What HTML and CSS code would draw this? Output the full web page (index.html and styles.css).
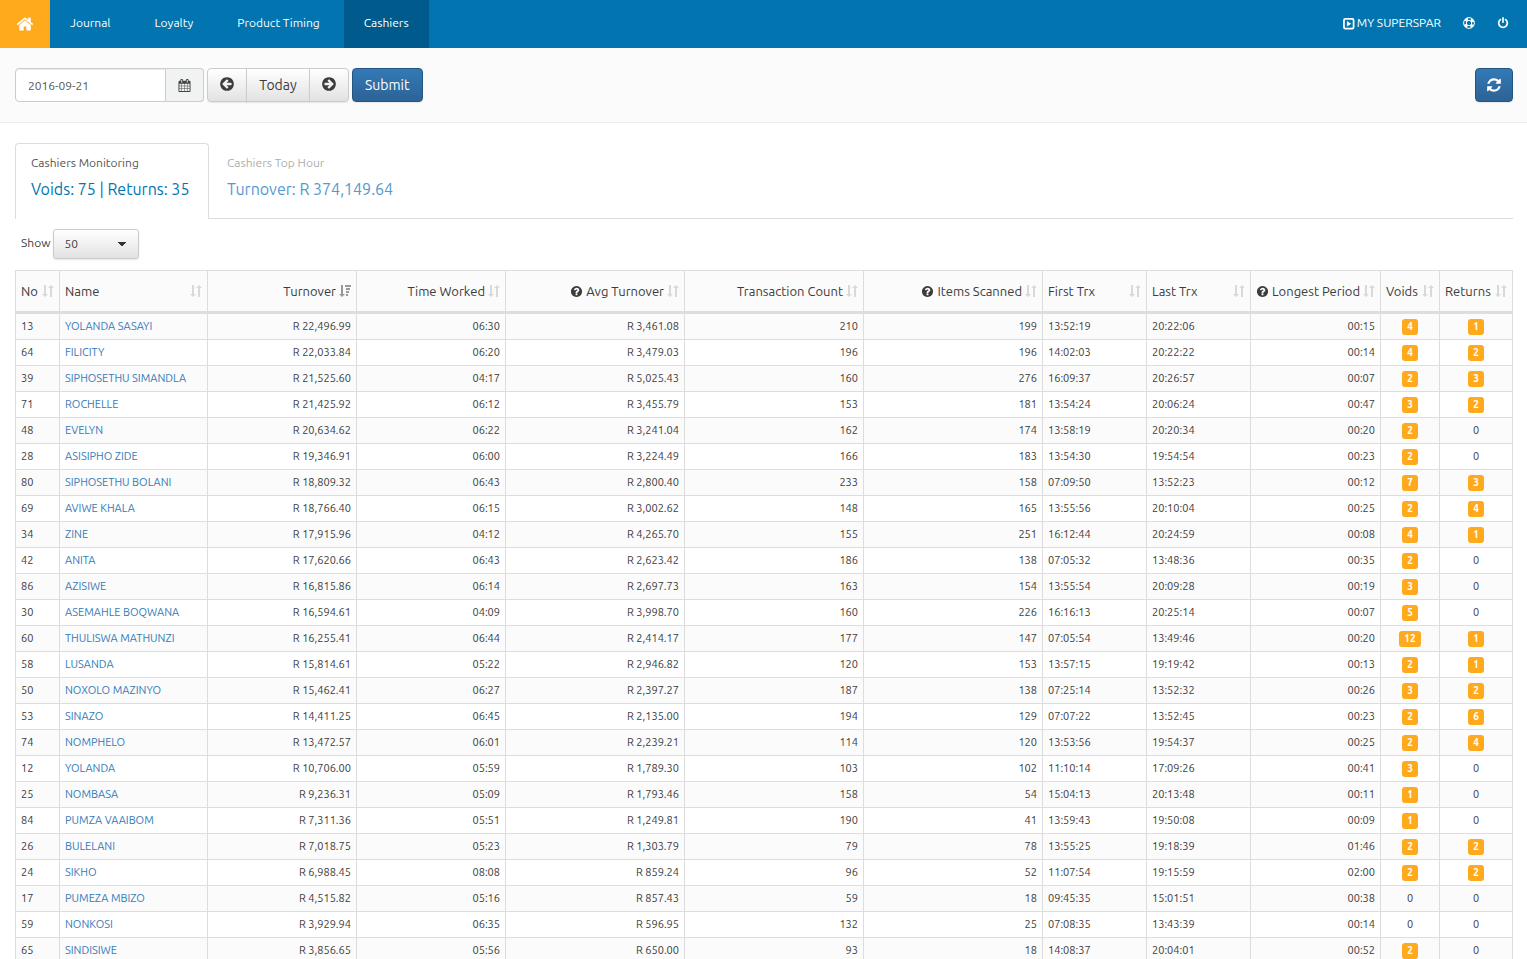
FILE: index.html
```
<!DOCTYPE html>
<html lang="en">
<head>
<meta charset="UTF-8">
<meta name="viewport" content="width=device-width, initial-scale=1.0">
<title>Cashiers</title>
<link rel="stylesheet" href="styles.css">
</head>
<body>
<!-- shared icons -->
<svg class="sprite" aria-hidden="true">
    <symbol id="home" viewBox="0 0 1792 1792"><path d="M1472 992v480q0 26-19 45t-45 19h-384v-384h-256v384h-384q-26 0-45-19t-19-45v-480q0-1 .5-3t.5-3l575-474 575 474q1 2 1 6zm223-69l-62 74q-8 9-21 11h-3q-13 0-21-7l-692-577-692 577q-12 8-24 7-13-2-21-11l-62-74q-8-10-7-23.5t11-21.5l719-599q32-26 76-26t76 26l244 204v-195q0-14 9-23t23-9h192q14 0 23 9t9 23v408l219 182q10 8 11 21.5t-7 23.5z"/></symbol>
    <symbol id="power" viewBox="0 0 1792 1792"><path d="M1664 896q0 156-61 298t-164 245-245 164-298 61-298-61-245-164-164-245-61-298q0-182 80.5-343t226.5-270q43-32 95.5-25t83.5 50q32 42 24.5 94.5t-49.5 84.5q-98 74-151.5 181t-53.5 228q0 104 40.5 198.5t109.5 163.5 163.5 109.5 198.5 40.5 198.5-40.5 163.5-109.5 109.5-163.5 40.5-198.5q0-121-53.5-228t-151.5-181q-42-32-49.5-84.5t24.5-94.5q31-43 84-50t95 25q146 109 226.5 270t80.5 343zm-640-768v640q0 52-38 90t-90 38-90-38-38-90v-640q0-52 38-90t90-38 90 38 38 90z"/></symbol>
    <symbol id="refresh" viewBox="0 0 1792 1792"><path d="M1639 1056q0 5-1 7-64 268-268 434.5t-478 166.5q-146 0-282.5-55t-243.5-157l-129 129q-19 19-45 19t-45-19-19-45v-448q0-26 19-45t45-19h448q26 0 45 19t19 45-19 45l-137 137q71 66 161 102t187 36q134 0 250-65t186-179q11-17 53-117 8-23 30-23h192q13 0 22.5 9.5t9.5 22.5zm25-800v448q0 26-19 45t-45 19h-448q-26 0-45-19t-19-45 19-45l138-138q-148-137-349-137-134 0-250 65t-186 179q-11 17-53 117-8 23-30 23h-199q-13 0-22.5-9.5t-9.5-22.5v-7q65-268 270-434.5t480-166.5q146 0 284 55.5t245 156.5l130-129q19-19 45-19t45 19 19 45z"/></symbol>
    <symbol id="left" viewBox="0 0 1792 1792"><path d="M1408 960v-128q0-26-19-45t-45-19h-502l189-189q19-19 19-45t-19-45l-91-91q-18-18-45-18t-45 18l-362 362-91 91q-18 18-18 45t18 45l91 91 362 362q18 18 45 18t45-18l91-91q18-18 18-45t-18-45l-189-189h502q26 0 45-19t19-45zm256-64q0 209-103 385.5t-279.5 279.5-385.5 103-385.5-103-279.5-279.5-103-385.5 103-385.5 279.5-279.5 385.5-103 385.5 103 279.5 279.5 103 385.5z"/></symbol>
    <symbol id="question" viewBox="0 0 1792 1792"><path d="M1024 1376v-192q0-14-9-23t-23-9h-192q-14 0-23 9t-9 23v192q0 14 9 23t23 9h192q14 0 23-9t9-23zm256-672q0-88-55.5-163t-138.5-116-170-41q-243 0-371 213-15 24 8 42l132 100q7 6 19 6 16 0 25-12 53-68 86-92 34-24 86-24 48 0 85.5 26t37.5 59q0 38-20 61t-68 45q-63 28-115.5 86.5t-52.5 125.5v36q0 14 9 23t23 9h192q14 0 23-9t9-23q0-19 21.5-49.5t54.5-49.5q32-18 49-28.5t46-35 44.5-48 28-60.5 12.5-81zm384 192q0 209-103 385.5t-279.5 279.5-385.5 103-385.5-103-279.5-279.5-103-385.5 103-385.5 279.5-279.5 385.5-103 385.5 103 279.5 279.5 103 385.5z"/></symbol>
    <symbol id="calendar" viewBox="0 0 1792 1792"><path d="M192 1664h288v-288h-288v288zm352 0h320v-288h-320v288zm-352-352h288v-320h-288v320zm352 0h320v-320h-320v320zm-352-384h288v-288h-288v288zm736 736h320v-288h-320v288zm-384-736h320v-288h-320v288zm768 736h288v-288h-288v288zm-384-352h320v-320h-320v320zm-352-864v-288q0-13-9.5-22.5t-22.5-9.5h-64q-13 0-22.5 9.5t-9.5 22.5v288q0 13 9.5 22.5t22.5 9.5h64q13 0 22.5-9.5t9.5-22.5zm736 864h288v-320h-288v320zm-384-384h320v-288h-320v288zm384 0h288v-288h-288v288zm32-480v-288q0-13-9.5-22.5t-22.5-9.5h-64q-13 0-22.5 9.5t-9.5 22.5v288q0 13 9.5 22.5t22.5 9.5h64q13 0 22.5-9.5t9.5-22.5zm384-64v1280q0 52-38 90t-90 38h-1408q-52 0-90-38t-38-90v-1280q0-52 38-90t90-38h128v-96q0-66 47-113t113-47h64q66 0 113 47t47 113v96h384v-96q0-66 47-113t113-47h64q66 0 113 47t47 113v96h128q52 0 90 38t38 90z"/></symbol>
    <symbol id="play" viewBox="0 0 12 12"><rect x="1.8" y="1.8" width="8.9" height="8.9" rx="1.2" fill="none" stroke="currentColor" stroke-width="1.6"/><path d="M4.5 3.6v5.2l4-2.6z"/></symbol>
    <symbol id="ring" viewBox="0 0 12 12"><g fill="none" stroke="currentColor"><circle cx="6" cy="6" r="5.4"/><circle cx="6" cy="6" r="2.7"/><circle cx="6" cy="6" r="4" stroke-width="2.8" stroke-dasharray="3.14 3.14" stroke-dashoffset="-1.57"/></g></symbol>
    <symbol id="sort" viewBox="0 0 12 12"><path d="M2 0h2v9h2l-3 3-3-3h2zM8 12h2V3h2L9 0 6 3h2z"/></symbol>
    <symbol id="desc" viewBox="0 0 12 12"><path d="M2 0h2v9h2l-3 3-3-3h2zM6 0h6v2H6zM7 3h4v2H7zM7 6h3v2H7zM7 9h2v2H7z"/></symbol>
</svg>

<nav class="navbar">
    <a class="home" href="#" aria-label="Home"><svg><use href="#home"/></svg></a>
    <a href="#">Journal</a>
    <a href="#">Loyalty</a>
    <a href="#">Product Timing</a>
    <a class="active" href="#">Cashiers</a>
    <div class="nav-right">
        <a href="#"><svg class="icon"><use href="#play"/></svg> MY SUPERSPAR</a>
        <a href="#" aria-label="Help"><svg class="icon-sm"><use href="#ring"/></svg></a>
        <a href="#" aria-label="Log out"><svg class="icon-sm"><use href="#power"/></svg></a>
    </div>
</nav>

<form class="toolbar" onsubmit="return false">
    <div class="date-group">
        <input type="text" value="2016-09-21" aria-label="Date">
        <button class="addon" type="button" aria-label="Pick a date"><svg class="icon"><use href="#calendar"/></svg></button>
    </div>
    <div class="btn-group">
        <button class="btn btn-icon" type="button" aria-label="Previous day"><svg class="icon-lg"><use href="#left"/></svg></button>
        <button class="btn" type="button">Today</button>
        <button class="btn btn-icon" type="button" aria-label="Next day"><svg class="icon-lg flip"><use href="#left"/></svg></button>
    </div>
    <button class="btn btn-primary" type="submit">Submit</button>
    <button class="btn btn-primary btn-refresh" type="button" aria-label="Refresh"><svg class="icon-lg"><use href="#refresh"/></svg></button>
</form>

<main>
    <div class="tabs">
        <a class="tab active" href="#">
            <span class="tab-title">Cashiers Monitoring</span>
            <span class="tab-value">Voids: 75 | Returns: 35</span>
        </a>
        <a class="tab" href="#">
            <span class="tab-title">Cashiers Top Hour</span>
            <span class="tab-value">Turnover: R 374,149.64</span>
        </a>
    </div>

    <div class="length">
        <label for="length">Show</label>
        <select id="length">
            <option>10</option>
            <option>25</option>
            <option selected>50</option>
            <option>100</option>
        </select>
    </div>

    <table>
        <colgroup>
            <col class="col-no"><col class="col-name"><col class="col-md"><col class="col-md">
            <col class="col-lg"><col class="col-lg"><col class="col-lg">
            <col class="col-trx"><col class="col-trx"><col class="col-period">
            <col class="col-voids"><col class="col-returns">
        </colgroup>
        <thead>
            <tr>
                <th><div>No <svg class="sort"><use href="#sort"/></svg></div></th>
                <th><div>Name <svg class="sort"><use href="#sort"/></svg></div></th>
                <th class="num"><div>Turnover <svg class="sort sorted"><use href="#desc"/></svg></div></th>
                <th class="num"><div>Time Worked <svg class="sort"><use href="#sort"/></svg></div></th>
                <th class="num"><div><svg class="icon"><use href="#question"/></svg>Avg Turnover <svg class="sort"><use href="#sort"/></svg></div></th>
                <th class="num"><div>Transaction Count <svg class="sort"><use href="#sort"/></svg></div></th>
                <th class="num"><div><svg class="icon"><use href="#question"/></svg>Items Scanned <svg class="sort"><use href="#sort"/></svg></div></th>
                <th><div>First Trx <svg class="sort"><use href="#sort"/></svg></div></th>
                <th><div>Last Trx <svg class="sort"><use href="#sort"/></svg></div></th>
                <th class="num"><div><svg class="icon"><use href="#question"/></svg>Longest Period <svg class="sort"><use href="#sort"/></svg></div></th>
                <th><div>Voids <svg class="sort"><use href="#sort"/></svg></div></th>
                <th><div>Returns <svg class="sort"><use href="#sort"/></svg></div></th>
            </tr>
        </thead>
        <tbody id="cashiers"></tbody>
    </table>
</main>
<script src="script.js"></script>
</body>
</html>
```
FILE: styles.css
```
* {
    box-sizing: border-box;
}

body {
    display: flex;
    flex-direction: column;
    height: 100vh;
    margin: 0;
    overflow: hidden;
    background: #fff;
    color: #3c3c3c;
    font-family: Ubuntu, "Noto Sans", sans-serif;
    font-size: 12px;
    line-height: 18px;
}

a {
    color: #337ab7;
    text-decoration: none;
}

button,
input,
select {
    font-family: inherit;
}

svg {
    fill: currentColor;
}

.sprite {
    display: none;
}

.icon {
    flex: none;
    width: 13px;
    height: 13px;
}

.icon-sm,
.sort {
    flex: none;
    width: 12px;
    height: 12px;
}

.icon-lg {
    width: 16px;
    height: 16px;
}

.flip {
    transform: scaleX(-1);
}

/* navbar */
.navbar {
    display: flex;
    flex: none;
    gap: 4px;
    height: 48px;
    background: #0275b0;
}

.navbar a {
    display: flex;
    align-items: center;
    gap: 2px;
    padding: 0 20px 2px;
    color: #fff;
}

.navbar .home {
    justify-content: center;
    width: 50px;
    margin-right: -4px;
    padding: 0;
    background: #ffa91c;
}

.home svg {
    width: 18px;
    height: 18px;
}

.navbar .active {
    background: #005b8c;
}

.nav-right {
    display: flex;
    margin-left: auto;
    padding-right: 7px;
}

.nav-right a {
    padding: 0 11px 2px;
}

/* toolbar */
.toolbar {
    display: flex;
    flex: none;
    gap: 3px;
    height: 75px;
    padding: 20px 14px 20px 15px;
    border-bottom: 1px solid #eee;
    background: #fbfbfb;
}

.date-group,
.btn-group {
    display: flex;
    height: 34px;
}

.date-group input {
    width: 151px;
    padding: 0 12px;
    border: 1px solid #ccc;
    border-radius: 4px 0 0 4px;
    background: #fff;
    box-shadow: inset 0 1px 1px rgba(0, 0, 0, .08);
    color: #555;
    font-size: 12px;
}

.addon {
    display: flex;
    align-items: center;
    justify-content: center;
    width: 38px;
    padding: 0;
    border: 1px solid #ccc;
    border-left: 0;
    border-radius: 0 4px 4px 0;
    background: #f1f3f3;
    color: #444;
}

.btn {
    display: flex;
    align-items: center;
    justify-content: center;
    height: 34px;
    padding: 0 12px;
    border: 1px solid #ccc;
    border-radius: 4px;
    background: linear-gradient(#fff, #e2e2e2);
    box-shadow: 0 1px 1px rgba(0, 0, 0, .08);
    color: #3c3c3c;
    font-size: 14px;
}

.btn-icon {
    padding: 0 11px 2px;
}

.btn-group .btn + .btn {
    margin-left: -1px;
}

.btn-group .btn:first-child {
    border-radius: 4px 0 0 4px;
}

.btn-group .btn:nth-child(2) {
    min-width: 64px;
    border-radius: 0;
}

.btn-group .btn:last-child {
    border-radius: 0 4px 4px 0;
}

.btn-primary {
    border-color: #245580;
    background: linear-gradient(#337ab7, #2d6294);
    color: #fff;
}

.btn-refresh {
    width: 38px;
    margin-left: auto;
    padding: 0;
}

/* content */
main {
    flex: 1;
    min-height: 0;
    padding: 20px 14px 0 15px;
    overflow: hidden;
}

.tabs {
    display: flex;
    gap: 2px;
    border-bottom: 1px solid #ddd;
}

.tab {
    min-width: 194px;
    height: 75px;
    padding: 10px 15px;
    border: 1px solid transparent;
    border-bottom: 0;
    border-radius: 4px 4px 0 0;
    opacity: .8;
}

.tab.active {
    height: 76px;
    margin-bottom: -1px;
    border-color: #ddd;
    background: #fff;
    opacity: 1;
}

.tab span {
    display: block;
}

.tab-title {
    color: #999;
}

.tab-value {
    margin-top: 6px;
    color: #2a80c5;
    font-size: 16px;
    line-height: 22px;
}

.active .tab-title {
    color: #555;
}

.active .tab-value {
    color: #0275b0;
}

.length {
    display: flex;
    gap: 3px;
    margin: 10px 0 11px;
    padding-left: 6px;
    line-height: 28px;
}

.length select {
    width: 86px;
    height: 30px;
    padding: 0 10px 2px;
    border: 1px solid #ccc;
    border-radius: 3px;
    appearance: none;
    background:
        conic-gradient(from -45deg at 50% 100%, #333 90deg, transparent 90deg) 64px 12px / 8px 4px no-repeat,
        linear-gradient(#fff, #e2e2e2);
    box-shadow: 0 1px 2px rgba(0, 0, 0, .1);
    color: #3c3c3c;
    font-size: 12px;
}

table {
    width: 100%;
    border: solid #ddd;
    border-width: 1px 0 0 1px;
    border-collapse: separate;
    border-spacing: 0;
    table-layout: fixed;
    font-size: 11px;
}

.col-no { width: 44px; }
.col-name { width: 148px; }
.col-md { width: 149px; }
.col-lg { width: 179px; }
.col-trx { width: 104px; }
.col-period { width: 130px; }
.col-voids { width: 59px; }
.col-returns { width: 73px; }

th,
td {
    height: 26px;
    padding: 0 5px 1px;
    border: solid #ddd;
    border-width: 0 1px 1px 0;
    text-align: left;
    white-space: nowrap;
}

th {
    height: 43px;
    padding-bottom: 0;
    border-bottom-width: 3px;
    background: #fbfbfb;
    font-size: 13px;
    font-weight: 400;
}

th div {
    display: flex;
    align-items: center;
    justify-content: space-between;
}

th.num div {
    justify-content: flex-end;
    gap: 3px;
}

.sort {
    color: #d9d9d9;
}

.sorted {
    color: #999;
}

tbody tr:nth-child(odd) {
    background: #fbfbfb;
}

.num {
    text-align: right;
}

.count {
    text-align: center;
}

.badge {
    display: inline-block;
    height: 16px;
    padding: 0 5px;
    border-radius: 3px;
    background: #ffa91c;
    color: #fff;
    font-size: 10px;
    font-weight: 700;
    line-height: 16px;
    vertical-align: middle;
}
```
FILE: script.js
```
// no, name, turnover, worked, avg, transactions, items, first, last, longest, voids, returns
const cashiers = `
13|YOLANDA SASAYI|R 22,496.99|06:30|R 3,461.08|210|199|13:52:19|20:22:06|00:15|4|1
64|FILICITY|R 22,033.84|06:20|R 3,479.03|196|196|14:02:03|20:22:22|00:14|4|2
39|SIPHOSETHU SIMANDLA|R 21,525.60|04:17|R 5,025.43|160|276|16:09:37|20:26:57|00:07|2|3
71|ROCHELLE|R 21,425.92|06:12|R 3,455.79|153|181|13:54:24|20:06:24|00:47|3|2
48|EVELYN|R 20,634.62|06:22|R 3,241.04|162|174|13:58:19|20:20:34|00:20|2|0
28|ASISIPHO ZIDE|R 19,346.91|06:00|R 3,224.49|166|183|13:54:30|19:54:54|00:23|2|0
80|SIPHOSETHU BOLANI|R 18,809.32|06:43|R 2,800.40|233|158|07:09:50|13:52:23|00:12|7|3
69|AVIWE KHALA|R 18,766.40|06:15|R 3,002.62|148|165|13:55:56|20:10:04|00:25|2|4
34|ZINE|R 17,915.96|04:12|R 4,265.70|155|251|16:12:44|20:24:59|00:08|4|1
42|ANITA|R 17,620.66|06:43|R 2,623.42|186|138|07:05:32|13:48:36|00:35|2|0
86|AZISIWE|R 16,815.86|06:14|R 2,697.73|163|154|13:55:54|20:09:28|00:19|3|0
30|ASEMAHLE BOQWANA|R 16,594.61|04:09|R 3,998.70|160|226|16:16:13|20:25:14|00:07|5|0
60|THULISWA MATHUNZI|R 16,255.41|06:44|R 2,414.17|177|147|07:05:54|13:49:46|00:20|12|1
58|LUSANDA|R 15,814.61|05:22|R 2,946.82|120|153|13:57:15|19:19:42|00:13|2|1
50|NOXOLO MAZINYO|R 15,462.41|06:27|R 2,397.27|187|138|07:25:14|13:52:32|00:26|3|2
53|SINAZO|R 14,411.25|06:45|R 2,135.00|194|129|07:07:22|13:52:45|00:23|2|6
74|NOMPHELO|R 13,472.57|06:01|R 2,239.21|114|120|13:53:56|19:54:37|00:25|2|4
12|YOLANDA|R 10,706.00|05:59|R 1,789.30|103|102|11:10:14|17:09:26|00:41|3|0
25|NOMBASA|R 9,236.31|05:09|R 1,793.46|158|54|15:04:13|20:13:48|00:11|1|0
84|PUMZA VAAIBOM|R 7,311.36|05:51|R 1,249.81|190|41|13:59:43|19:50:08|00:09|1|0
26|BULELANI|R 7,018.75|05:23|R 1,303.79|79|78|13:55:25|19:18:39|01:46|2|2
24|SIKHO|R 6,988.45|08:08|R 859.24|96|52|11:07:54|19:15:59|02:00|2|2
17|PUMEZA MBIZO|R 4,515.82|05:16|R 857.43|59|18|09:45:35|15:01:51|00:38|0|0
59|NONKOSI|R 3,929.94|06:35|R 596.95|132|25|07:08:35|13:43:39|00:14|0|0
65|SINDISIWE|R 3,856.65|05:56|R 650.00|93|18|14:08:37|20:04:01|00:52|2|0
`;

const numeric = [2, 3, 4, 5, 6, 9];

function cell(value, i) {
    if (i === 1) {
        return `<td><a href="#">${value}</a></td>`;
    }
    if (i >= 10) {
        // zero counts are shown without a badge
        return `<td class="count">${value === '0' ? value : `<span class="badge">${value}</span>`}</td>`;
    }
    return `<td${numeric.includes(i) ? ' class="num"' : ''}>${value}</td>`;
}

document.getElementById('cashiers').innerHTML = cashiers.trim().split('\n')
    .map(row => `<tr>${row.split('|').map(cell).join('')}</tr>`)
    .join('');
```
